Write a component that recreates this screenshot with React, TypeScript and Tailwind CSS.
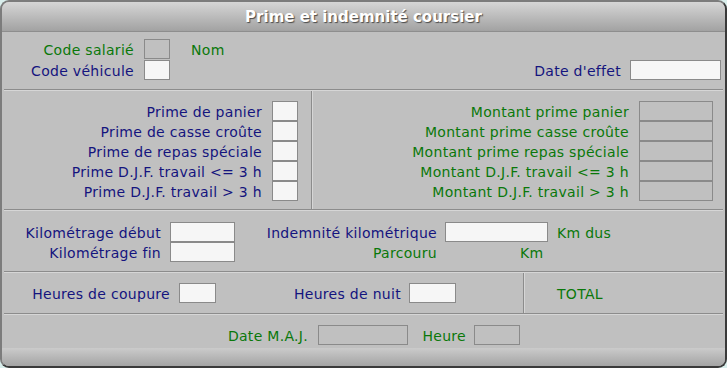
import React from 'react';

const green = 'text-[#0a780a] pt-[2px]';
const navy = 'text-[#14147e] pt-[2px]';

const Box: React.FC<{ w: number; filled?: boolean; className?: string }> = ({ w, filled = true, className = '' }) => (
    <div
        style={{ width: w }}
        className={`h-[20px] shrink-0 border border-[#8a8a8a] ${filled ? 'bg-[#f6f6f6]' : 'bg-transparent'} ${className}`}
    />
);

const HSep = () => (
    <div className="h-[2px] mx-[2px] border-t border-[#8c8c8c] bg-[#d6d6d6]" />
);

const PrimeRow: React.FC<{ label: string; color: string; boxW: number; filled: boolean }> = ({ label, color, boxW, filled }) => (
    <div className="flex items-center justify-end h-[20px]">
        <span className={`${color} mr-[10px] whitespace-nowrap`}>{label}</span>
        <Box w={boxW} filled={filled} />
    </div>
);

const App: React.FC = () => {
    const primes = [
        'Prime de panier',
        'Prime de casse croûte',
        'Prime de repas spéciale',
        'Prime D.J.F. travail <= 3 h',
        'Prime D.J.F. travail > 3 h',
    ];
    const montants = [
        'Montant prime panier',
        'Montant prime casse croûte',
        'Montant prime repas spéciale',
        'Montant D.J.F. travail <= 3 h',
        'Montant D.J.F. travail > 3 h',
    ];

    return (
        <div className="w-[727px] h-[368px] bg-[#d9eeec] font-['DejaVu_Sans',sans-serif] text-[14px] tracking-[0.3px]">
            <div className="w-full h-full flex flex-col overflow-hidden rounded-[9px] border-2 border-t-[#7c7c7c] border-l-[#7c7c7c] border-r-[#3a3a3a] border-b-[#3a3a3a] bg-[#c0c0c0]">
                {/* Titre */}
                <div className="h-[30px] shrink-0 flex items-center justify-center border-b border-[#8e8e8e] bg-gradient-to-b from-[#d6d6d6] to-[#a2a2a2]">
                    <span className="text-white font-bold text-[15px] tracking-normal pt-[2px] [text-shadow:1px_1px_1px_#4a4a4a]">
                        Prime et indemnité coursier
                    </span>
                </div>

                {/* Section salarié */}
                <div className="h-[57px] shrink-0 pt-[7px]">
                    <div className="flex items-center h-[20px]">
                        <span className={`w-[132px] text-right ${green} whitespace-nowrap`}>Code salarié</span>
                        <Box w={26} filled={false} className="ml-[10px]" />
                        <span className={`${green} ml-[21px]`}>Nom</span>
                    </div>
                    <div className="flex items-center h-[20px] mt-[1px]">
                        <span className={`w-[132px] text-right ${navy} whitespace-nowrap`}>Code véhicule</span>
                        <Box w={26} className="ml-[10px]" />
                        <span className={`${navy} ml-auto mr-[9px]`}>Date d'effet</span>
                        <Box w={91} className="mr-[4px]" />
                    </div>
                </div>
                <HSep />

                {/* Primes */}
                <div className="h-[118px] shrink-0 flex">
                    <div className="w-[309px] shrink-0 pt-[10px] pr-[13px] flex flex-col">
                        {primes.map(p => (
                            <PrimeRow key={p} label={p} color={navy} boxW={26} filled />
                        ))}
                    </div>
                    <div className="w-[2px] border-l border-[#8c8c8c] bg-[#d6d6d6]" />
                    <div className="flex-1 pt-[10px] pr-[12px] flex flex-col">
                        {montants.map(m => (
                            <PrimeRow key={m} label={m} color={green} boxW={74} filled={false} />
                        ))}
                    </div>
                </div>
                <HSep />

                {/* Kilométrage */}
                <div className="h-[60px] shrink-0 pt-[11px]">
                    <div className="flex items-center h-[20px]">
                        <span className={`w-[159px] text-right ${navy} whitespace-nowrap`}>Kilométrage début</span>
                        <Box w={65} className="ml-[9px]" />
                        <span className={`w-[202px] text-right ${navy} whitespace-nowrap`}>Indemnité kilométrique</span>
                        <Box w={103} className="ml-[8px]" />
                        <span className={`${green} ml-[9px]`}>Km dus</span>
                    </div>
                    <div className="flex items-center h-[20px]">
                        <span className={`w-[159px] text-right ${navy} whitespace-nowrap`}>Kilométrage fin</span>
                        <Box w={65} className="ml-[9px]" />
                        <span className={`w-[202px] text-right ${green}`}>Parcouru</span>
                        <span className={`${green} ml-[83px]`}>Km</span>
                    </div>
                </div>
                <HSep />

                {/* Heures */}
                <div className="h-[40px] shrink-0 flex">
                    <div className="w-[521px] shrink-0 flex items-center">
                        <span className={`w-[168px] text-right ${navy} whitespace-nowrap`}>Heures de coupure</span>
                        <Box w={37} className="ml-[9px]" />
                        <span className={`w-[185px] text-right ${navy} whitespace-nowrap`}>Heures de nuit</span>
                        <Box w={47} className="ml-[8px]" />
                    </div>
                    <div className="w-[2px] border-l border-[#8c8c8c] bg-[#d6d6d6]" />
                    <div className="flex-1 flex items-center pl-[32px]">
                        <span className={green}>TOTAL</span>
                    </div>
                </div>
                <HSep />

                {/* Mise à jour */}
                <div className="h-[33px] shrink-0 pt-[10px]">
                    <div className="flex items-center h-[20px]">
                        <span className={`w-[306px] text-right ${green} whitespace-nowrap`}>Date M.A.J.</span>
                        <Box w={90} filled={false} className="ml-[10px]" />
                        <span className={`w-[58px] text-right ${green}`}>Heure</span>
                        <Box w={46} filled={false} className="ml-[8px]" />
                    </div>
                </div>

                {/* Barre du bas */}
                <div className="flex-1 bg-gradient-to-b from-[#cbcbcb] to-[#a4a4a4]" />
            </div>
        </div>
    );
};

export default App;
